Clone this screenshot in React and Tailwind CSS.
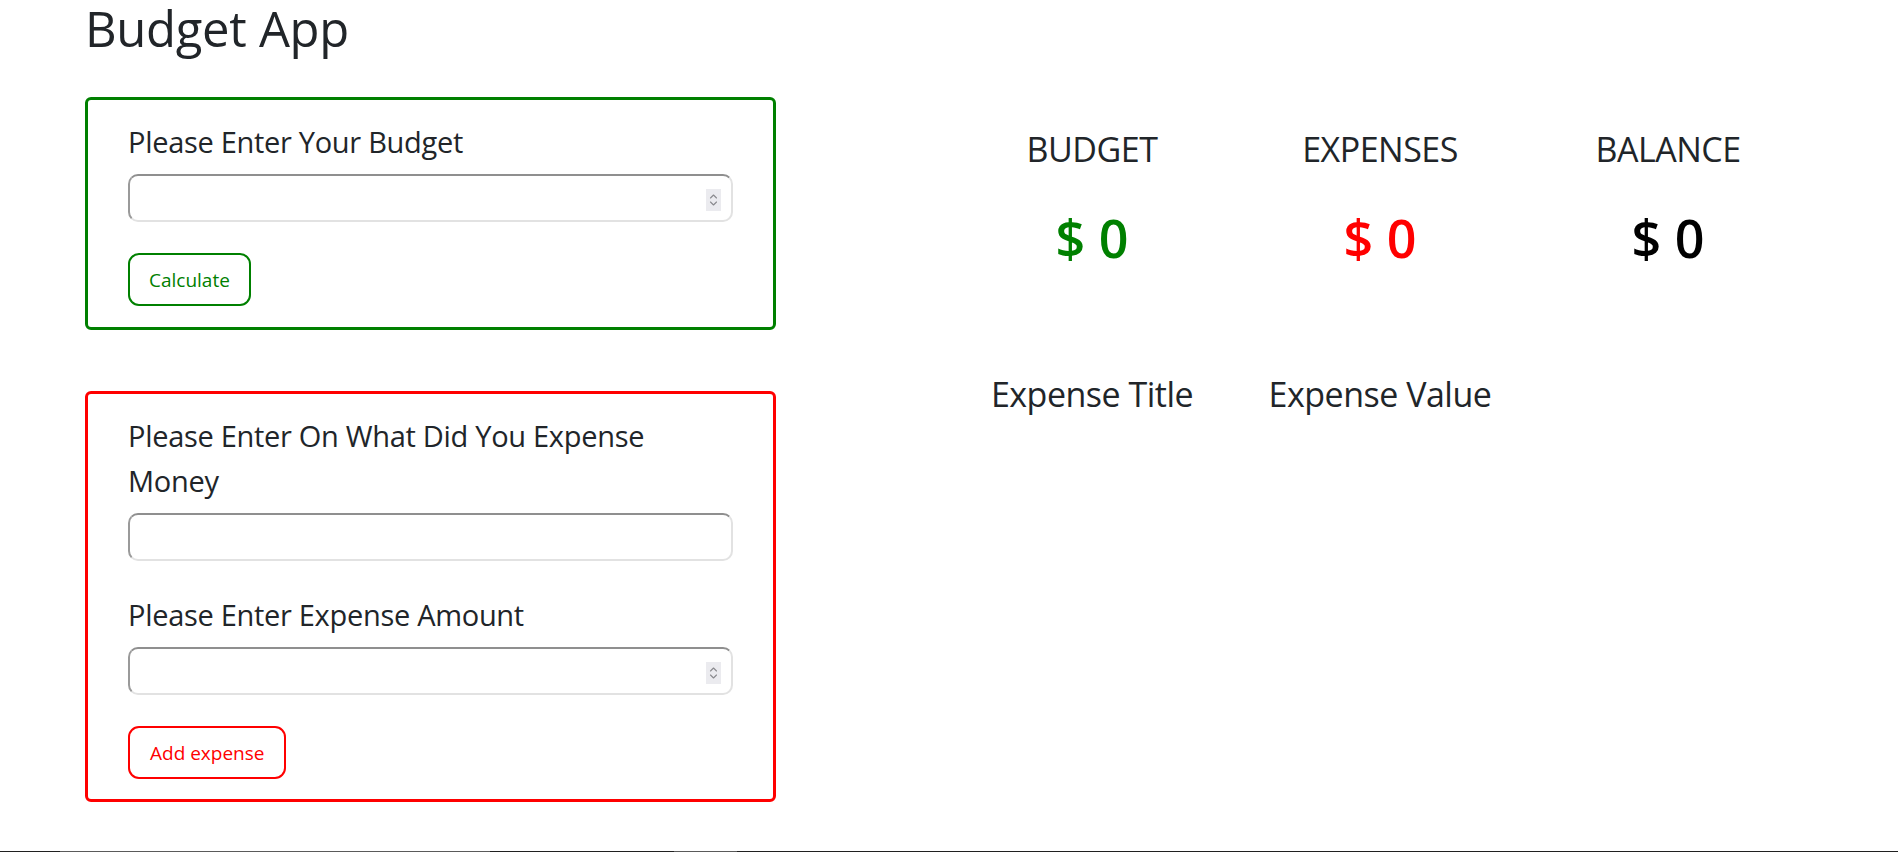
import React from "react";

function Spinner() {
  return (
    <div className="absolute right-[10px] top-[13px] w-[15px] h-[22px] bg-[#ebebef] flex items-center justify-center">
      <svg width="15" height="22" viewBox="0 0 15 22" fill="none">
        <path d="M4.5 9 L7.5 6 L10.5 9" stroke="#8a8a8e" strokeWidth="1.1" strokeLinecap="round" strokeLinejoin="round" />
        <path d="M4.5 13 L7.5 16 L10.5 13" stroke="#8a8a8e" strokeWidth="1.1" strokeLinecap="round" strokeLinejoin="round" />
      </svg>
    </div>
  );
}

function Field({ number }) {
  return (
    <div className="relative w-full h-[48px] rounded-[10px] border-2 border-t-[#8f8f8f] border-l-[#9a9a9a] border-b-[#e2e2e2] border-r-[#e2e2e2] bg-white">
      {number ? <Spinner /> : null}
    </div>
  );
}

function Label({ children }) {
  return (
    <div className="text-[29px] leading-[45px] tracking-[-0.3px] text-[#212529] mb-[10px]">
      {children}
    </div>
  );
}

export default function App() {
  return (
    <div
      className="w-full h-[852px] flex flex-col bg-white text-[#212529]"
      style={{ fontFamily: '"Open Sans", "Noto Sans", sans-serif' }}
    >
      <div className="px-[85px]">
        <h1 className="text-[49px] leading-[56px] font-normal text-[#212529] tracking-[-0.3px]">
          Budget App
        </h1>

        <div className="flex mt-[41px]">
          <div className="w-[691px] shrink-0 flex flex-col">
            <div className="rounded-[6px] border-[3px] border-[#008000] px-[40px] pt-[19px] pb-[21px]">
              <Label>Please Enter Your Budget</Label>
              <Field number />
              <button className="mt-[31px] h-[53px] px-[19px] rounded-[11px] border-2 border-[#008000] text-[#008000] text-[19px] leading-[30px] bg-white">
                Calculate
              </button>
            </div>

            <div className="mt-[61px] rounded-[6px] border-[3px] border-[#ff0000] px-[40px] pt-[19px] pb-[20px]">
              <div className="w-[545px]">
                <Label>Please Enter On What Did You Expense Money</Label>
              </div>
              <Field />
              <div className="mt-[31px]">
                <Label>Please Enter Expense Amount</Label>
              </div>
              <Field number />
              <button className="mt-[31px] h-[53px] px-[20px] rounded-[11px] border-2 border-[#ff0000] text-[#ff0000] text-[19px] leading-[30px] bg-white">
                Add expense
              </button>
            </div>
          </div>

          <div className="ml-[172px] w-[864px] shrink-0 pt-[32px]">
            <div className="grid grid-cols-3 text-center">
              <div className="text-[34px] leading-[40px] tracking-[-0.5px]">BUDGET</div>
              <div className="text-[34px] leading-[40px] tracking-[-0.5px]">EXPENSES</div>
              <div className="text-[34px] leading-[40px] tracking-[-0.5px]">BALANCE</div>
            </div>
            <div className="grid grid-cols-3 text-center mt-[39px]">
              <div className="text-[52px] leading-[60px] font-semibold text-[#008000]">$ 0</div>
              <div className="text-[52px] leading-[60px] font-semibold text-[#ff0000]">$ 0</div>
              <div className="text-[52px] leading-[60px] font-semibold text-black">$ 0</div>
            </div>
            <div className="grid grid-cols-3 text-center mt-[106px]">
              <div className="text-[34px] leading-[40px] tracking-[-0.5px]">Expense Title</div>
              <div className="text-[34px] leading-[40px] tracking-[-0.5px]">Expense Value</div>
              <div></div>
            </div>
          </div>
        </div>
      </div>

      <div className="mt-auto h-[1px] w-full flex">
        <div className="w-[60px] bg-[#202020]"></div>
        <div className="w-[430px] bg-[#5a5a5a]"></div>
        <div className="w-[184px] bg-[#202020]"></div>
        <div className="w-[63px] bg-[#5a5a5a]"></div>
        <div className="flex-1 bg-[#202020]"></div>
      </div>
    </div>
  );
}
